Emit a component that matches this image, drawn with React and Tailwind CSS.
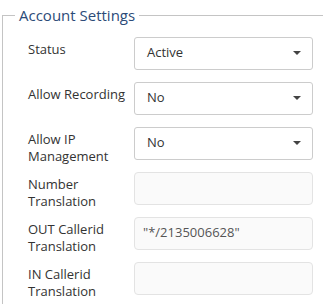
import React from "react";

const fields = [
  { label: "Status", type: "select", value: "Active" },
  { label: "Allow Recording", type: "select", value: "No" },
  { label: "Allow IP Management", type: "select", value: "No" },
  { label: "Number Translation", type: "input", value: "" },
  { label: "OUT Callerid Translation", type: "input", value: '"*/2135006628"' },
  { label: "IN Callerid Translation", type: "input", value: "" },
];

function SelectBox({ value }) {
  return (
    <div className="h-[33px] w-full flex items-center justify-between border border-[#cccccc] rounded-[3px] bg-white pl-[12px] pr-[11px] text-[13px] text-[#333333]">
      <span>{value}</span>
      <span className="w-0 h-0 border-x-[4px] border-t-[4px] border-x-transparent border-t-[#444444]" />
    </div>
  );
}

function InputBox({ value }) {
  return (
    <div className="h-[33px] w-full flex items-center border border-[#e3e3e3] rounded-[4px] bg-[#fafafa] px-[8px] text-[13px] text-[#555555]">
      {value}
    </div>
  );
}

export default function App() {
  return (
    <div
      className="w-[323px] h-[304px] overflow-hidden bg-white pt-[4px]"
      style={{ fontFamily: "'Open Sans', 'Liberation Sans', sans-serif" }}
    >
      <fieldset className="ml-[2px] border-l border-t border-[#c4c4c4] pl-[12px] pt-[10px] pb-[20px]">
        <legend className="px-[4px] text-[15px] leading-[22.5px] text-[#2c4b78]">
          Account Settings
        </legend>

        <div className="flex flex-col gap-[12px] pl-[13px]">
          {fields.map((item) => (
            <div key={item.label} className="grid grid-cols-[106px_179px] h-[33px]">
              <label className="h-[33px] overflow-visible pt-[4px] pr-[6px] text-[13px] leading-[17px] text-[#333333]">
                {item.label}
              </label>
              {item.type === "select" ? (
                <SelectBox value={item.value} />
              ) : (
                <InputBox value={item.value} />
              )}
            </div>
          ))}
        </div>
      </fieldset>
    </div>
  );
}
